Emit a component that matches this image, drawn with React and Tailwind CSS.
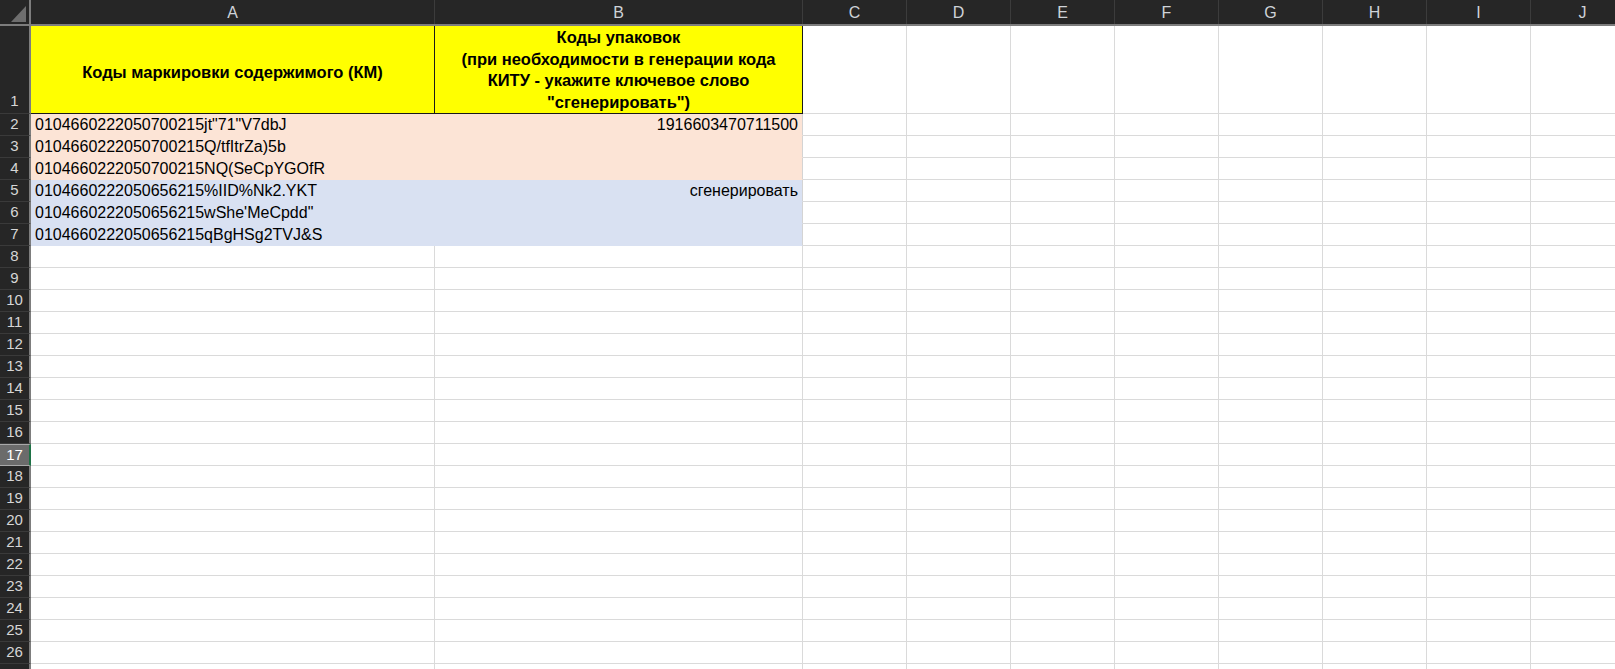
import React from 'react';

const FONT = { fontFamily: '"Liberation Sans", Arial, sans-serif' };

const colLetters = ['C', 'D', 'E', 'F', 'G', 'H', 'I', 'J'];

const dataRows = [
  { n: 2, a: '0104660222050700215jt"71"V7dbJ', b: '1916603470711500', fill: 'peach' },
  { n: 3, a: '0104660222050700215Q/tfItrZa)5b', b: '', fill: 'peach' },
  { n: 4, a: '0104660222050700215NQ(SeCpYGOfR', b: '', fill: 'peach' },
  { n: 5, a: '0104660222050656215%IID%Nk2.YKT', b: 'сгенерировать', fill: 'blue' },
  { n: 6, a: "0104660222050656215wShe'MeCpdd\"", b: '', fill: 'blue' },
  { n: 7, a: '0104660222050656215qBgHSg2TVJ&S', b: '', fill: 'blue' },
];

const emptyRows = Array.from({ length: 19 }, (_, i) => i + 8);

// номер строки слева
function RowHead({ n, active }) {
  if (active) {
    return (
      <div className="w-[31px] shrink-0 h-full flex items-center justify-center bg-[#6b6b6b] border-y border-[#a8a8a8] border-r-2 border-r-[#1e7145] text-[15px] text-white">
        {n}
      </div>
    );
  }
  return (
    <div className="w-[31px] shrink-0 h-full flex items-center justify-center bg-[#262626] border-b border-[#3a3a3a] border-r-2 border-r-[#7d7d7d] text-[15px] text-[#d6d6d6]">
      {n}
    </div>
  );
}

function EmptyCells() {
  return colLetters.map((c) => (
    <div key={c} className="w-[104px] shrink-0 h-full border-r border-b border-[#dadada]" />
  ));
}

export default function App() {
  return (
    <div className="w-[1615px] h-[669px] overflow-hidden bg-white text-black" style={FONT}>
      {/* шапка с буквами столбцов */}
      <div className="flex h-[26px] bg-[#262626] border-b-2 border-[#7d7d7d]">
        <div className="w-[31px] shrink-0 h-full border-r-2 border-[#7d7d7d] flex items-end justify-end pr-[3px] pb-[2px]">
          <svg width="15" height="16" viewBox="0 0 15 16">
            <polygon points="15,0 15,16 0,16" fill="#6e6e6e" />
          </svg>
        </div>
        <div className="w-[404px] shrink-0 h-full border-r border-[#3c3c3c] flex items-center justify-center pt-[2px] text-[16px] text-[#cfd3d8]">
          A
        </div>
        <div className="w-[368px] shrink-0 h-full border-r border-[#3c3c3c] flex items-center justify-center pt-[2px] text-[16px] text-[#cfd3d8]">
          B
        </div>
        {colLetters.map((c) => (
          <div
            key={c}
            className="w-[104px] shrink-0 h-full border-r border-[#3c3c3c] flex items-center justify-center pt-[2px] text-[16px] text-[#cfd3d8]"
          >
            {c}
          </div>
        ))}
      </div>

      {/* строка 1 — заголовки */}
      <div className="flex h-[88px]">
        <div className="w-[31px] shrink-0 h-full flex items-end justify-center pb-[1px] bg-[#262626] border-b border-[#3a3a3a] border-r-2 border-r-[#7d7d7d] text-[15px] text-[#d6d6d6]">
          1
        </div>
        <div className="w-[404px] shrink-0 h-full bg-[#ffff00] border-r border-b border-[#1a1a1a] flex items-center justify-center pt-[6px] font-bold text-[16.5px]">
          Коды маркировки содержимого (КМ)
        </div>
        <div className="w-[368px] shrink-0 h-full bg-[#ffff00] border-r border-b border-[#1a1a1a] flex flex-col items-center justify-end font-bold text-[16.5px] leading-[21.5px] text-center whitespace-nowrap">
          <div>Коды упаковок</div>
          <div>(при необходимости в генерации кода</div>
          <div>КИТУ - укажите ключевое слово</div>
          <div>"сгенерировать")</div>
        </div>
        <EmptyCells />
      </div>

      {/* строки с кодами */}
      {dataRows.map((r) => {
        const bg = r.fill === 'peach' ? 'bg-[#fce4d6] border-[#fce4d6]' : 'bg-[#d9e1f2] border-[#d9e1f2]';
        return (
          <div key={r.n} className="flex h-[22px]">
            <RowHead n={r.n} />
            <div className={`w-[404px] shrink-0 h-full ${bg} border-r border-b flex items-center pl-[4px] text-[16px] whitespace-nowrap`}>
              {r.a}
            </div>
            <div
              className={`w-[368px] shrink-0 h-full ${bg} border-b border-r border-r-[#d4d4d4] flex items-center justify-end pr-[4px] text-[16px] whitespace-nowrap`}
            >
              {r.b}
            </div>
            <EmptyCells />
          </div>
        );
      })}

      {/* пустые строки */}
      {emptyRows.map((n) => (
        <div key={n} className="flex h-[22px]">
          <RowHead n={n} active={n === 17} />
          <div className="w-[404px] shrink-0 h-full border-r border-b border-[#dadada]" />
          <div className="w-[368px] shrink-0 h-full border-r border-b border-[#dadada]" />
          <EmptyCells />
        </div>
      ))}

      {/* край следующей строки, номер не виден */}
      <div className="flex h-[22px]">
        <div className="w-[31px] shrink-0 h-full bg-[#262626] border-r-2 border-r-[#7d7d7d]" />
        <div className="w-[404px] shrink-0 h-full border-r border-[#dadada]" />
        <div className="w-[368px] shrink-0 h-full border-r border-[#dadada]" />
        {colLetters.map((c) => (
          <div key={c} className="w-[104px] shrink-0 h-full border-r border-[#dadada]" />
        ))}
      </div>
    </div>
  );
}
